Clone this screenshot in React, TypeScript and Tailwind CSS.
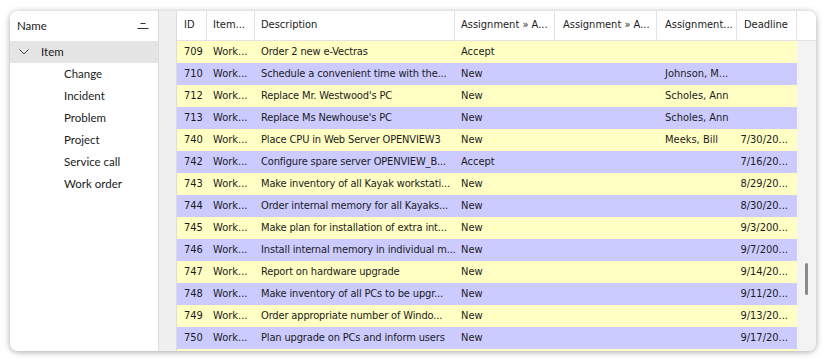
const cols = [
  { key: 'id', label: 'ID', w: 'w-[30px]', pl: 'pl-[7px]' },
  { key: 'item', label: 'Item...', w: 'w-[48px]', pl: 'pl-[6px]' },
  { key: 'desc', label: 'Description', w: 'w-[200px]', pl: 'pl-[6px]' },
  { key: 'a1', label: 'Assignment » A...', w: 'w-[100px]', pl: 'pl-[6px]' },
  { key: 'a2', label: 'Assignment » A...', w: 'w-[102px]', pl: 'pl-[8px]' },
  { key: 'a3', label: 'Assignment...', w: 'w-[80px]', pl: 'pl-[8px]' },
  { key: 'deadline', label: 'Deadline', w: 'w-[60px]', pl: 'pl-[7px]' },
];

const rows = [
  ['709', 'Order 2 new e-Vectras', 'Accept', '', ''],
  ['710', 'Schedule a convenient time with the...', 'New', 'Johnson, M...', ''],
  ['712', "Replace Mr. Westwood's PC", 'New', 'Scholes, Ann', ''],
  ['713', "Replace Ms Newhouse's PC", 'New', 'Scholes, Ann', ''],
  ['740', 'Place CPU in Web Server OPENVIEW3', 'New', 'Meeks, Bill', '7/30/20...'],
  ['742', 'Configure spare server OPENVIEW_B...', 'Accept', '', '7/16/20...'],
  ['743', 'Make inventory of all Kayak workstati...', 'New', '', '8/29/20...'],
  ['744', 'Order internal memory for all Kayaks...', 'New', '', '8/30/20...'],
  ['745', 'Make plan for installation of extra int...', 'New', '', '9/3/200...'],
  ['746', 'Install internal memory in individual m...', 'New', '', '9/7/200...'],
  ['747', 'Report on hardware upgrade', 'New', '', '9/14/20...'],
  ['748', 'Make inventory of all PCs to be upgr...', 'New', '', '9/11/20...'],
  ['749', 'Order appropriate number of Windo...', 'New', '', '9/13/20...'],
  ['750', 'Plan upgrade on PCs and inform users', 'New', '', '9/17/20...'],
];

const tree = ['Change', 'Incident', 'Problem', 'Project', 'Service call', 'Work order'];

function SortIcon() {
  return (
    <svg width="12" height="8" viewBox="0 0 12 8" className="text-[#333]">
      <line x1="3.5" y1="1.5" x2="8.5" y2="1.5" stroke="currentColor" strokeWidth="1" />
      <line x1="0.5" y1="6.5" x2="11.5" y2="6.5" stroke="currentColor" strokeWidth="1" />
    </svg>
  );
}

function Chevron() {
  return (
    <svg width="10" height="6" viewBox="0 0 10 6" className="text-[#444]">
      <path d="M0.5 0.5 L5 5 L9.5 0.5" fill="none" stroke="currentColor" strokeWidth="1" />
    </svg>
  );
}

export default function App() {
  return (
    <div className="w-[826px] h-[361px] bg-white pt-[11px] pl-[10px]">
      <div className="flex w-[806px] h-[340px] rounded-[8px] overflow-hidden bg-white shadow-[0_1px_6px_rgba(0,0,0,0.35)] text-[#1b1b1b]">
        {/* tree panel */}
        <div className="w-[148px] flex flex-col bg-white text-[11.5px] font-['Lato','Open_Sans','Liberation_Sans',sans-serif]">
          <div className="h-[30px] flex items-center justify-between pl-[7px] pr-[9px]">
            <span>Name</span>
            <SortIcon />
          </div>
          <div className="h-[22px] flex items-center bg-[#e5e5e5] pl-[9px] gap-[12px]">
            <Chevron />
            <span>Item</span>
          </div>
          {tree.map((t) => (
            <div key={t} className="h-[22px] flex items-center pl-[54px]">
              {t}
            </div>
          ))}
        </div>

        {/* splitter */}
        <div className="w-[19px] bg-[#f0f0f0] border-x border-[#dcdcdc]" />

        {/* grid */}
        <div className="flex-1 flex flex-col text-[11px] font-['DejaVu_Sans_Condensed','DejaVu_Sans','Liberation_Sans',sans-serif]">
          <div className="h-[30px] flex border-b border-[#e3e3e3] bg-white shrink-0">
            {cols.map((c) => (
              <div key={c.key} className={`${c.w} ${c.pl} shrink-0 flex items-center border-r border-[#e3e3e3] whitespace-nowrap overflow-hidden`}>
                {c.label}
              </div>
            ))}
            <div className="flex-1" />
          </div>
          <div className="flex flex-1 min-h-0">
            <div className="w-[620px] flex flex-col">
              {rows.map((r, i) => (
                <div key={r[0]} className={`h-[22px] shrink-0 flex items-center whitespace-nowrap ${i % 2 === 0 ? 'bg-[#ffffc4]' : 'bg-[#cbcbff]'}`}>
                  <div className="w-[30px] shrink-0 pl-[7px]">{r[0]}</div>
                  <div className="w-[48px] shrink-0 pl-[6px]">Work...</div>
                  <div className="w-[200px] shrink-0 pl-[6px] tracking-[-0.15px] overflow-hidden">{r[1]}</div>
                  <div className="w-[100px] shrink-0 pl-[6px]">{r[2]}</div>
                  <div className="w-[102px] shrink-0" />
                  <div className="w-[80px] shrink-0 pl-[8px] truncate">{r[3]}</div>
                  <div className="w-[60px] shrink-0 pr-[9px] text-right truncate">{r[4]}</div>
                </div>
              ))}
              <div className="h-[22px] shrink-0 bg-[#ffffc4]" />
            </div>
            <div className="w-[19px] bg-[#f3f3f3] relative">
              <div className="absolute left-[8px] top-[222px] w-[3px] h-[32px] rounded-full bg-[#8a8a8a]" />
            </div>
          </div>
        </div>
      </div>
    </div>
  );
}
